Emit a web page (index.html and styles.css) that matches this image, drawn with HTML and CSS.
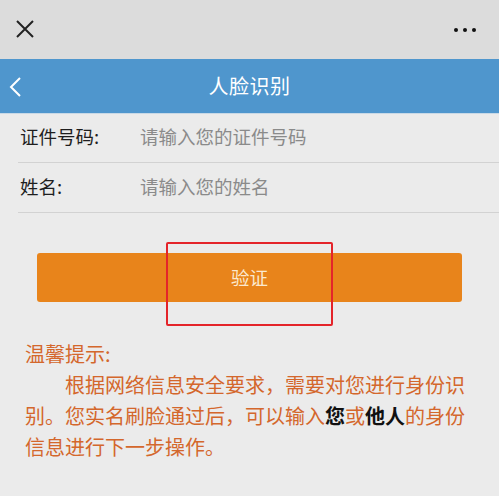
FILE: index.html
```html
<!DOCTYPE html>
<html>

<head>
    <title>人脸识别</title>
    <meta charset="utf-8">
    <meta name="viewport" content="width=device-width, initial-scale=1.0">
    <link rel="stylesheet" href="styles.css">
</head>

<body>

    <header class="topbar">
        <svg class="luk" width="20" height="20" viewBox="0 0 20 20">
            <path d="M2 2 L18 18 M18 2 L2 18" stroke="#222" stroke-width="2" fill="none" />
        </svg>
        <div class="prikker"><span></span><span></span><span></span></div>
    </header>

    <nav class="titel">
        <svg class="tilbage" width="14" height="20" viewBox="0 0 14 20">
            <path d="M12 1 L3 10 L12 19" stroke="#fff" stroke-width="2" fill="none" />
        </svg>
        <h1>人脸识别</h1>
    </nav>

    <section class="felter">
        <div class="felt">
            <label>证件号码:</label>
            <span class="hint">请输入您的证件号码</span>
        </div>
        <div class="felt">
            <label>姓名:</label>
            <span class="hint">请输入您的姓名</span>
        </div>
    </section>

    <div class="knap-boks">
        <button class="knap">验证</button>
        <div class="markering"></div>
    </div>

    <section class="tip">
        <p class="tip-titel">温馨提示:</p>
        <p class="tip-tekst">根据网络信息安全要求，需要对您进行身份识别。您实名刷脸通过后，可以输入<b>您</b>或<b>他人</b>的身份信息进行下一步操作。</p>
    </section>

</body>

</html>
```

FILE: styles.css
```css
body {
    margin: 0;
    background: #ebebeb;
    font-family: "Noto Sans CJK SC", "Noto Sans", sans-serif;
    width: 499px;
    height: 496px;
    overflow: hidden;
}

.topbar {
    height: 59px;
    background: #dcdcdc;
    display: flex;
    align-items: center;
    justify-content: space-between;
    padding: 0 23px 0 15px;
}

.luk {
    margin-top: -1px;
}

.prikker {
    display: flex;
    gap: 5px;
}

.prikker span {
    width: 4px;
    height: 4px;
    border-radius: 50%;
    background: #111;
}

.titel {
    height: 55px;
    background: #4f96cd;
    position: relative;
    display: flex;
    align-items: center;
    justify-content: center;
    border-bottom: 1px solid #c9d9e6;
    box-sizing: border-box;
    padding-bottom: 2px;
}

.tilbage {
    position: absolute;
    left: 8px;
    top: 18px;
}

.titel h1 {
    margin: 0;
    font-size: 20px;
    font-weight: 400;
    color: #fff;
    letter-spacing: 0.5px;
}

.felter {
    padding-left: 18px;
}

.felt {
    height: 49px;
    display: flex;
    align-items: center;
    border-bottom: 1px solid #d2d2d2;
    font-size: 18.5px;
    box-sizing: border-box;
    padding-bottom: 4px;
}

.felt:last-child {
    height: 50px;
}

.felt label {
    width: 120px;
    padding-left: 2px;
    color: #1e1e1e;
}

.hint {
    color: #8a8a8a;
}

.knap-boks {
    position: relative;
    padding: 40px 37px 0;
}

.knap {
    display: block;
    width: 100%;
    height: 49px;
    border: 0;
    border-radius: 3px;
    background: #e8841b;
    color: #fbe9cf;
    font-family: inherit;
    font-size: 18.5px;
    padding-bottom: 3px;
}

.markering {
    position: absolute;
    left: 166px;
    top: 29px;
    width: 163px;
    height: 80px;
    border: 2px solid #e4242a;
    border-radius: 2px;
}

.tip {
    margin-top: 36px;
    padding: 0 34px 0 25px;
    color: #d4672c;
    font-size: 20px;
    line-height: 31px;
}

.tip p {
    margin: 0;
}

.tip-tekst {
    text-indent: 2em;
}

.tip b {
    color: #111;
    font-weight: 700;
}
```
